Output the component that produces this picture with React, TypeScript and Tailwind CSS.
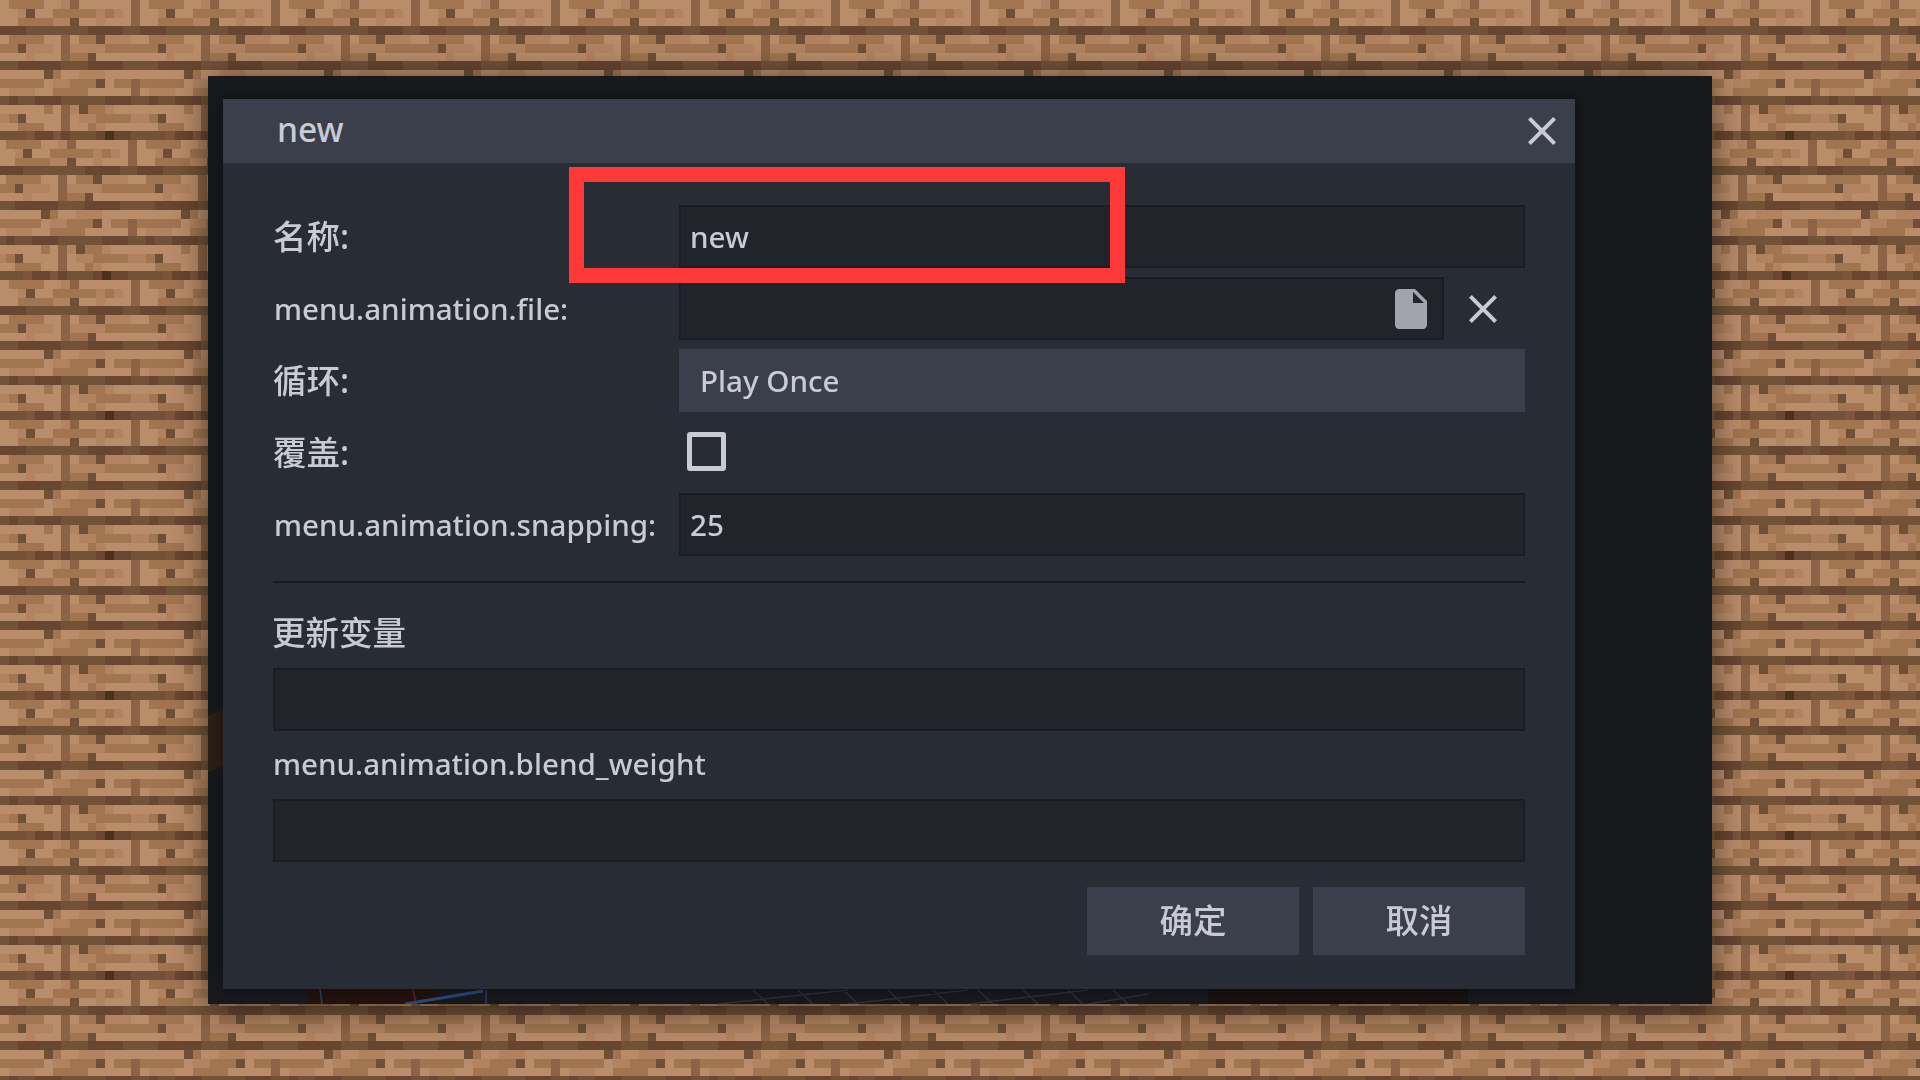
// App.tsx
const TILE = [
  "LMMMMLLADLLLLLLD",
  "LLAKLLMMMMMAMALD",
  "LLMMMMAAKLLALLLD",
  "1112222222111122",
  "LMMMMLLDLMMKAAAL",
  "MMKAAALDAAAAMMMM",
  "LLLALLLDMMKLLLLL",
  "2211111222111122",
  "LLLLLKMLLAAALLLL",
  "MMMMMLAAMMMKLMMD",
  "LAAALLMMMMLLLLLD",
  "2122111222221112",
  "LLLLLMLDAKMMALLL",
  "AMKLLLLDLAAMMMMA",
  "LLMMMLLDLLMALLLL",
  "222B11B12221X112",
];

const COLORS: Record<string, string> = {
  L: "#b98c6a",
  A: "#b18361",
  M: "#a07550",
  D: "#8c6345",
  K: "#6f5036",
  "1": "#684631",
  "2": "#725337",
  B: "#7c553b",
  X: "#4a3020",
};

const Planks = () => (
  <svg className="absolute inset-0 h-full w-full" shapeRendering="crispEdges">
    <defs>
      <pattern id="planks" patternUnits="userSpaceOnUse" width="140" height="140" viewBox="0 0 16 16">
        {TILE.map((row, y) =>
          row.split("").map((c, x) => (
            <rect key={`${x}-${y}`} x={x} y={y} width="1.02" height="1.02" fill={COLORS[c]} />
          )),
        )}
      </pattern>
      <pattern id="planks-shifted" href="#planks" patternTransform="translate(-3 0)" />
    </defs>
    <rect width="1920" height="1080" fill="url(#planks)" />
    <rect y="140" width="1920" height="140" fill="url(#planks-shifted)" />
  </svg>
);

// bits of the 3D viewport that show round the dialog
const Viewport = () => (
  <svg className="absolute inset-0 h-full w-full" viewBox="0 0 1504 928" fill="none">
    <rect x="100" y="912" width="130" height="16" fill="#23120e" />
    <rect x="1000" y="912" width="260" height="16" fill="#18110f" />
    <path d="M0 640L15 634V690L0 696Z" fill="#2c2015" />
    <path d="M112 913L114 928" stroke="#23406a" strokeWidth="1.5" />
    <path d="M205 913L208 928" stroke="#6a1c2a" strokeWidth="1.5" />
    <path d="M197 928L275 915" stroke="#254a7c" strokeWidth="3" />
    <path d="M278 914V928" stroke="#23406a" strokeWidth="1.5" />
    <path
      d="M510 928L640 914M640 928L760 914M760 928L880 914M880 928L940 918M545 914L560 928M590 914L605 928M635 914L650 928M680 914L695 928M725 914L740 928M770 914L785 928M815 914L830 928M860 914L875 928M905 914L920 928"
      stroke="#2b2f38"
      strokeWidth="1.5"
    />
  </svg>
);

const CloseIcon = ({ className }: { className: string }) => (
  <svg className={className} viewBox="5 5 14 14" fill="currentColor">
    <path d="M19 6.41L17.59 5 12 10.59 6.41 5 5 6.41 10.59 12 5 17.59 6.41 19 12 13.41 17.59 19 19 17.59 13.41 12z" />
  </svg>
);

const FileIcon = () => (
  <svg className="h-[40px] w-[32px] text-[#a3a3ad]" viewBox="4 2 16 20" fill="currentColor">
    <path d="M6 2c-1.1 0-1.99.9-1.99 2L4 20c0 1.1.89 2 1.99 2H18c1.1 0 2-.9 2-2V8l-6-6H6zm7 7V3.5L18.5 9H13z" />
  </svg>
);

const Row = ({ label, cjk, children }: { label: string; cjk?: boolean; children: React.ReactNode }) => (
  <div className="flex h-[63px] items-center">
    <label className={cjk ? "w-[406px] shrink-0 text-[33.5px]" : "w-[406px] shrink-0 pl-[1px] pt-[2px]"}>{label}</label>
    {children}
  </div>
);

const Field = ({ value = "" }: { value?: string }) => (
  <div className="flex h-[63px] w-full items-center border-2 border-[#1b1d22] bg-[#21252b] pl-[9px] pt-[2px]">{value}</div>
);

const Button = ({ label }: { label: string }) => (
  <div className="flex h-[68px] w-[212px] items-center justify-center bg-[#3a3f4b] pb-[1px] text-[33.5px]">{label}</div>
);

export default function App() {
  return (
    <div className="relative h-screen w-screen overflow-hidden font-['Noto_Sans','Noto_Sans_CJK_SC',sans-serif] text-[#cacad4]">
      <Planks />

      {/* screenshot frame */}
      <div className="relative ml-[208px] mt-[76px] h-[928px] w-[1504px] bg-[#17191d] pl-[15px] pt-[23px] shadow-[0_4px_34px_rgba(0,0,0,0.55)]">
        <Viewport />

        {/* dialog */}
        <div className="relative flex h-[890px] w-[1352px] flex-col bg-[#282c34] text-[29.6px] font-medium shadow-[0_0_14px_rgba(0,0,0,0.45)] blur-[0.5px]">
          <div className="flex h-[64px] shrink-0 items-center justify-between bg-[#3a3f4b] pl-[54px] pr-[19px]">
            <span className="pb-[3px] text-[33.5px]">new</span>
            <CloseIcon className="h-[28px] w-[28px]" />
          </div>

          <div className="flex flex-col px-[50px] pt-[42px]">
            <div className="flex flex-col gap-[9px]">
              <Row label="名称:" cjk>
                <Field value="new" />
              </Row>
              <Row label="menu.animation.file:">
                <div className="flex h-[63px] w-[765px] items-center justify-end border-2 border-[#1b1d22] bg-[#21252b] pr-[15px]">
                  <FileIcon />
                </div>
                <CloseIcon className="ml-[25px] h-[28px] w-[28px]" />
              </Row>
              <Row label="循环:" cjk>
                <div className="flex h-[63px] w-full items-center bg-[#3a3f4b] pl-[21px] pt-[2px]">Play Once</div>
              </Row>
              <Row label="覆盖:" cjk>
                <div className="mb-[3px] ml-[8px] h-[39px] w-[39px] rounded-[3px] border-[5px] border-[#cacad4]" />
              </Row>
              <Row label="menu.animation.snapping:">
                <Field value="25" />
              </Row>
            </div>

            <div className="mt-[25px] h-[2px] bg-[#181a1f]" />

            <div className="-ml-[1px] flex h-[85px] items-center pt-[14px] text-[33.5px]">更新变量</div>
            <Field />
            <div className="flex h-[68px] items-center pb-[1px]">menu.animation.blend_weight</div>
            <Field />

            <div className="mt-[25px] flex justify-end gap-[14px]">
              <Button label="确定" />
              <Button label="取消" />
            </div>
          </div>
        </div>
      </div>

      {/* highlight drawn over the screenshot */}
      <div className="absolute left-[569px] top-[167px] h-[116px] w-[556px] border-[15px] border-[#ff3838]" />
    </div>
  );
}
